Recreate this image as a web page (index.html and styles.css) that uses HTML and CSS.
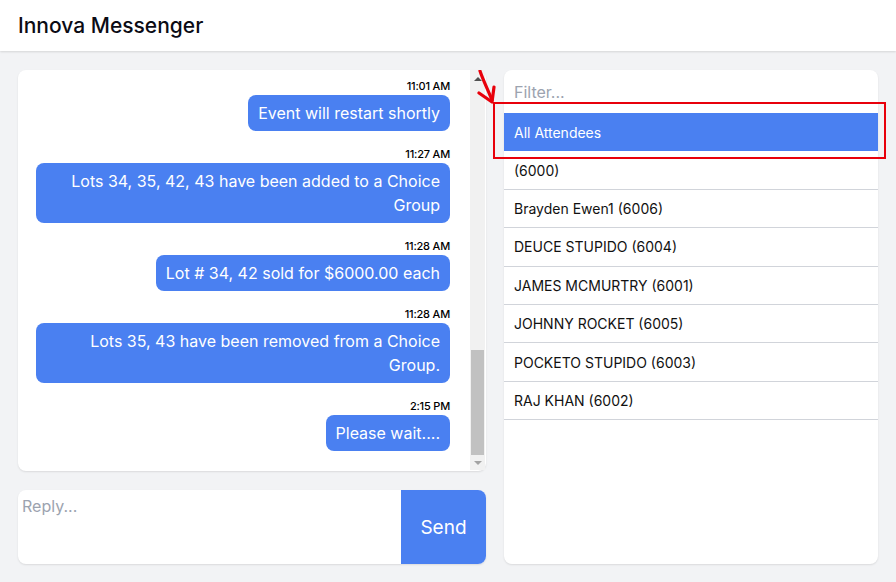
FILE: index.html
```html
<!DOCTYPE html>
<html lang="en">
<head>
<meta charset="utf-8">
<title>Innova Messenger</title>
<link rel="stylesheet" href="styles.css">
</head>
<body>
<header class="topbar">
  <h1 class="title">Innova Messenger</h1>
</header>
<main class="layout">
  <section class="chat-col">
    <div class="chat-card">
      <div class="messages">
        <div class="msg">
          <div class="time">11:01 AM</div>
          <div class="bubble">Event will restart shortly</div>
        </div>
        <div class="msg">
          <div class="time">11:27 AM</div>
          <div class="bubble">Lots 34, 35, 42, 43 have been added to a Choice Group</div>
        </div>
        <div class="msg">
          <div class="time">11:28 AM</div>
          <div class="bubble">Lot # 34, 42 sold for $6000.00 each</div>
        </div>
        <div class="msg">
          <div class="time">11:28 AM</div>
          <div class="bubble">Lots 35, 43 have been removed from a Choice Group.</div>
        </div>
        <div class="msg">
          <div class="time">2:15 PM</div>
          <div class="bubble">Please wait....</div>
        </div>
      </div>
      <div class="scrollbar">
        <div class="sb-btn"><span class="tri up"></span></div>
        <div class="sb-track"><div class="sb-thumb"></div></div>
        <div class="sb-btn"><span class="tri down"></span></div>
      </div>
    </div>
    <form class="reply">
      <textarea class="reply-input" placeholder="Reply..."></textarea>
      <button type="button" class="send">Send</button>
    </form>
  </section>
  <aside class="people-card">
    <input class="filter" type="text" placeholder="Filter...">
    <ul class="people">
      <li class="person active">All Attendees</li>
      <li class="person">(6000)</li>
      <li class="person">Brayden Ewen1 (6006)</li>
      <li class="person">DEUCE STUPIDO (6004)</li>
      <li class="person">JAMES MCMURTRY (6001)</li>
      <li class="person">JOHNNY ROCKET (6005)</li>
      <li class="person">POCKETO STUPIDO (6003)</li>
      <li class="person">RAJ KHAN (6002)</li>
    </ul>
  </aside>
</main>
<div class="annot-box"></div>
<svg class="annot-arrow" width="24" height="36" viewBox="0 0 24 36">
  <path d="M3 1 C 6 10, 11 20, 15 30" fill="none" stroke="#e8000b" stroke-width="3.2" stroke-linecap="round"/>
  <path d="M2 23 L15 32 L17 17" fill="none" stroke="#e8000b" stroke-width="3.2" stroke-linecap="round" stroke-linejoin="round"/>
</svg>
</body>
</html>
```

FILE: styles.css
```css
* { box-sizing: border-box; }
html, body { margin: 0; padding: 0; }
body {
  width: 896px;
  height: 582px;
  overflow: hidden;
  background: #f2f3f5;
  font-family: "Inter", "Noto Sans", sans-serif;
  color: #111827;
  position: relative;
}
.topbar {
  height: 51px;
  background: #fff;
  box-shadow: 0 1px 2px rgba(0,0,0,0.12);
  display: flex;
  align-items: center;
  padding: 0 18px;
  position: relative;
  z-index: 1;
}
.title {
  margin: 0;
  font-size: 21px;
  font-weight: 500;
  color: #0b0b14;
}
.layout {
  display: grid;
  grid-template-columns: 468px 374px;
  column-gap: 18px;
  padding: 19px 18px 18px;
  height: 531px;
}
.chat-col {
  display: flex;
  flex-direction: column;
  gap: 19px;
  min-height: 0;
}
.chat-card {
  height: 401px;
  background: #fff;
  border-radius: 8px;
  box-shadow: 0 1px 2px rgba(0,0,0,0.1);
  padding: 0 1px 1px 0;
  display: flex;
}
.messages {
  flex: 1;
  min-width: 0;
  overflow: hidden;
  display: flex;
  flex-direction: column;
  justify-content: flex-end;
  padding: 0 20px 19px 18px;
}
.scrollbar {
  width: 15px;
  display: flex;
  flex-direction: column;
  background: #f1f1f1;
}
.sb-btn {
  height: 15px;
  display: flex;
  align-items: center;
  justify-content: center;
}
.sb-btn:first-child { padding-top: 3px; }
.tri {
  width: 0;
  height: 0;
  border-left: 4px solid transparent;
  border-right: 4px solid transparent;
}
.tri.up { border-bottom: 4px solid #505050; }
.tri.down { border-top: 4px solid #a3a3a3; }
.sb-track {
  flex: 1;
  display: flex;
  flex-direction: column;
  justify-content: flex-end;
  padding: 0 1px;
}
.sb-thumb {
  height: 105px;
  background: #c1c1c1;
}
.msg {
  display: flex;
  flex-direction: column;
  align-items: flex-end;
  margin-top: 16px;
  flex-shrink: 0;
}
.time {
  font-size: 11px;
  font-weight: 500;
  line-height: 14px;
  color: #000;
  margin-bottom: 2px;
  letter-spacing: -0.2px;
}
.bubble {
  background: #4a80f1;
  color: #fff;
  font-size: 16px;
  line-height: 24px;
  padding: 6px 10px;
  border-radius: 8px;
  text-align: right;
}
.reply {
  height: 74px;
  margin: 0;
  display: flex;
  background: #fff;
  border-radius: 8px;
  box-shadow: 0 1px 2px rgba(0,0,0,0.1);
  overflow: hidden;
}
.reply-input {
  flex: 1;
  border: none;
  resize: none;
  outline: none;
  padding: 6px 4px;
  font-family: inherit;
  font-size: 16px;
  line-height: 20px;
  color: #111;
  background: transparent;
}
.reply-input::placeholder { color: #9ca3af; }
.send {
  width: 85px;
  border: none;
  background: #4a80f1;
  color: #fff;
  font-family: inherit;
  font-size: 19px;
  padding: 0;
}
.people-card {
  background: #fff;
  border-radius: 8px;
  box-shadow: 0 1px 2px rgba(0,0,0,0.1);
  display: flex;
  flex-direction: column;
  overflow: hidden;
}
.filter {
  border: none;
  outline: none;
  height: 43px;
  flex-shrink: 0;
  padding: 0 10px;
  font-family: inherit;
  font-size: 16px;
  color: #111;
  background: transparent;
}
.filter::placeholder { color: #9ca3af; }
.people {
  list-style: none;
  margin: 0;
  padding: 0;
}
.person {
  height: 38.4px;
  display: flex;
  align-items: center;
  padding: 0 10px;
  font-size: 14px;
  color: #111;
  border-bottom: 1px solid #d1d4da;
}
.person.active {
  background: #4a80f1;
  color: #fff;
  border-bottom: none;
}
.annot-box {
  position: absolute;
  left: 493px;
  top: 102px;
  width: 393px;
  height: 57px;
  border: 2px solid #e8000b;
}
.annot-arrow {
  position: absolute;
  left: 477px;
  top: 70px;
}
```
